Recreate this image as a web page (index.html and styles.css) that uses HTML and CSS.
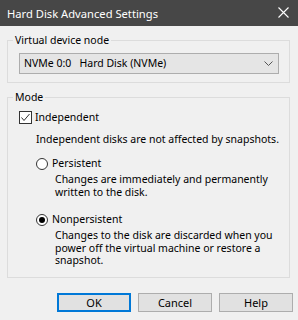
FILE: index.html
```html
<!DOCTYPE html>
<html lang="en">
<head>
    <meta charset="UTF-8">
    <title>Hard Disk Advanced Settings</title>
    <link rel="stylesheet" href="styles.css">
</head>
<body>
    <div class="titlebar">
        <span class="title">Hard Disk Advanced Settings</span>
        <svg class="close" width="11" height="11" viewBox="0 0 11 11">
            <path d="M0.5 0.5 L10.5 10.5 M10.5 0.5 L0.5 10.5" stroke="#fff" stroke-width="1.1" fill="none"/>
        </svg>
    </div>

    <div class="content">
        <fieldset class="group group-node">
            <legend>Virtual device node</legend>
            <div class="combo">
                <span>NVMe 0:0&nbsp;&nbsp; Hard Disk (NVMe)</span>
                <svg width="9" height="5" viewBox="0 0 9 5">
                    <path d="M0.5 0.5 L4.5 4.5 L8.5 0.5" stroke="#555" stroke-width="1" fill="none"/>
                </svg>
            </div>
        </fieldset>

        <fieldset class="group group-mode">
            <legend>Mode</legend>
            <label class="check-row">
                <span class="checkbox">
                    <svg width="11" height="11" viewBox="0 0 11 11">
                        <path d="M1.5 5.5 L4 8.5 L9.5 2" stroke="#333" stroke-width="1" fill="none"/>
                    </svg>
                </span>
                <span>Independent</span>
            </label>
            <p class="note note-first">Independent disks are not affected by snapshots.</p>

            <div class="option">
                <label class="radio-row">
                    <span class="radio"></span>
                    <span>Persistent</span>
                </label>
                <p class="note">Changes are immediately and permanently<br>written to the disk.</p>
            </div>

            <div class="option">
                <label class="radio-row">
                    <span class="radio checked"></span>
                    <span>Nonpersistent</span>
                </label>
                <p class="note">Changes to the disk are discarded when you<br>power off the virtual machine or restore a<br>snapshot.</p>
            </div>
        </fieldset>

        <div class="buttons">
            <button class="btn btn-default">OK</button>
            <button class="btn">Cancel</button>
            <button class="btn">Help</button>
        </div>
    </div>
</body>
</html>
```

FILE: styles.css
```css
* {
    box-sizing: border-box;
}

body {
    margin: 0;
    background: #f0f0f0;
    font-family: "Noto Sans", sans-serif;
    font-size: 10.5px;
    line-height: 13px;
    color: #000;
}

.titlebar {
    height: 26px;
    background: #474747;
    color: #fff;
    display: flex;
    align-items: center;
    justify-content: space-between;
    padding: 0 9px 0 7px;
    font-size: 11.2px;
}

.close {
    margin-top: -1px;
}

.content {
    padding: 8px 8px 0 7px;
}

.group {
    margin: 0;
    border: 1px solid #dcdcdc;
    padding: 0 10px 8px 11px;
    min-width: 0;
}

.group legend {
    margin-left: -6px;
    padding: 0 2px;
}

.group-mode {
    margin-top: 8px;
    padding-bottom: 10px;
}

.combo {
    margin-top: 6px;
    height: 21px;
    border: 1px solid #adadad;
    background: #e5e5e5;
    display: flex;
    align-items: center;
    justify-content: space-between;
    padding: 0 5px 0 4px;
    white-space: nowrap;
}

.check-row,
.radio-row {
    display: flex;
    align-items: center;
    gap: 4px;
}

.check-row {
    margin-top: 7px;
    gap: 3px;
}

.checkbox {
    width: 13px;
    height: 13px;
    border: 1px solid #333;
    background: #fff;
    display: flex;
}

.note {
    margin: 0;
    white-space: nowrap;
}

.note-first {
    margin: 9px 0 0 17px;
}

.option {
    margin: 11px 0 0 17px;
}

.option + .option {
    margin-top: 15px;
}

.option .note {
    margin: 3px 0 0 19px;
    line-height: 12.5px;
}

.radio {
    width: 12px;
    height: 12px;
    border: 1px solid #333;
    border-radius: 50%;
    background: #fff;
    display: flex;
    align-items: center;
    justify-content: center;
}

.radio.checked::after {
    content: "";
    width: 6px;
    height: 6px;
    border-radius: 50%;
    background: #000;
}

.buttons {
    display: flex;
    justify-content: flex-end;
    gap: 7px;
    margin: 15px -3px 0 0;
}

.btn {
    width: 74px;
    height: 19px;
    border: 1px solid #adadad;
    background: #e1e1e1;
    font-family: inherit;
    font-size: 11px;
    padding: 0;
    color: #000;
}

.btn-default {
    border: 2px solid #0078d7;
}
```
